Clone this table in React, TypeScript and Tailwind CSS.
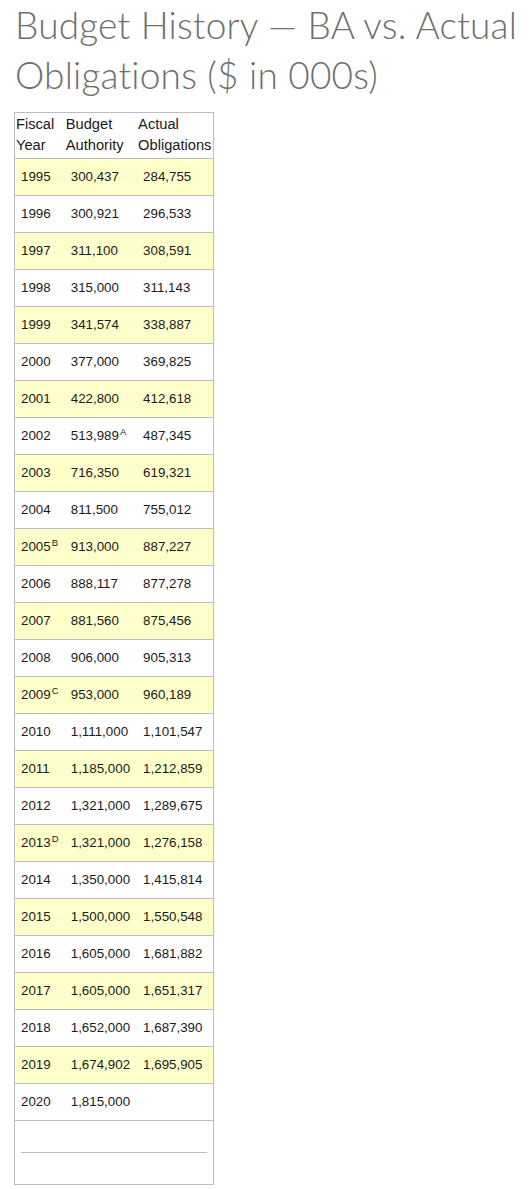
import React from "react";

type Row = {
  year: string;
  yearNote?: string;
  ba: string;
  baNote?: string;
  actual: string;
};

const rows: Row[] = [
  { year: "1995", ba: "300,437", actual: "284,755" },
  { year: "1996", ba: "300,921", actual: "296,533" },
  { year: "1997", ba: "311,100", actual: "308,591" },
  { year: "1998", ba: "315,000", actual: "311,143" },
  { year: "1999", ba: "341,574", actual: "338,887" },
  { year: "2000", ba: "377,000", actual: "369,825" },
  { year: "2001", ba: "422,800", actual: "412,618" },
  { year: "2002", ba: "513,989", baNote: "A", actual: "487,345" },
  { year: "2003", ba: "716,350", actual: "619,321" },
  { year: "2004", ba: "811,500", actual: "755,012" },
  { year: "2005", yearNote: "B", ba: "913,000", actual: "887,227" },
  { year: "2006", ba: "888,117", actual: "877,278" },
  { year: "2007", ba: "881,560", actual: "875,456" },
  { year: "2008", ba: "906,000", actual: "905,313" },
  { year: "2009", yearNote: "C", ba: "953,000", actual: "960,189" },
  { year: "2010", ba: "1,111,000", actual: "1,101,547" },
  { year: "2011", ba: "1,185,000", actual: "1,212,859" },
  { year: "2012", ba: "1,321,000", actual: "1,289,675" },
  { year: "2013", yearNote: "D", ba: "1,321,000", actual: "1,276,158" },
  { year: "2014", ba: "1,350,000", actual: "1,415,814" },
  { year: "2015", ba: "1,500,000", actual: "1,550,548" },
  { year: "2016", ba: "1,605,000", actual: "1,681,882" },
  { year: "2017", ba: "1,605,000", actual: "1,651,317" },
  { year: "2018", ba: "1,652,000", actual: "1,687,390" },
  { year: "2019", ba: "1,674,902", actual: "1,695,905" },
  { year: "2020", ba: "1,815,000", actual: "" },
];

const Note = ({ children }: { children: React.ReactNode }) => (
  <sup className="text-[9.5px] ml-[1px]">{children}</sup>
);

export default function App() {
  return (
    <div className="min-h-[1189px] bg-white pl-[14px] font-['Liberation_Sans',Arial,sans-serif]">
      <h1 className="pl-[1px] font-['Lato',sans-serif] font-light text-[37px] leading-[50px] text-[#6f6f6f] tracking-[0.2px]">
        Budget History — BA vs. Actual Obligations ($ in 000s)
      </h1>
      <table className="mt-[12px] border-collapse border border-[#bdbdbd] text-[#1a1a1a] w-[200px] table-fixed">
        <colgroup>
          <col className="w-[50px]" />
          <col className="w-[72px]" />
          <col className="w-[76px]" />
        </colgroup>
        <thead>
          <tr className="border-b border-[#bdbdbd] text-[14.67px] leading-[21px] text-left align-top">
            <th className="font-normal px-[1px] pt-[1px] pb-[2px]">Fiscal Year</th>
            <th className="font-normal px-[1px] pt-[1px] pb-[2px]">Budget Authority</th>
            <th className="font-normal px-[1px] pt-[1px] pb-[2px]">Actual Obligations</th>
          </tr>
        </thead>
        <tbody className="text-[13.33px]">
          {rows.map((r, i) => (
            <tr
              key={r.year}
              className={`h-[37px] border-b border-[#bdbdbd] ${i % 2 === 0 ? "bg-[#ffffcc]" : "bg-white"}`}
            >
              <td className="px-[6px] whitespace-nowrap">
                {r.year}
                {r.yearNote && <Note>{r.yearNote}</Note>}
              </td>
              <td className="px-[6px] whitespace-nowrap">
                {r.ba}
                {r.baNote && <Note>{r.baNote}</Note>}
              </td>
              <td className="px-[6px] whitespace-nowrap">{r.actual}</td>
            </tr>
          ))}
          <tr className="h-[64px]">
            <td colSpan={3} className="px-[6px]">
              <hr className="border-t border-[#bdbdbd]" />
            </td>
          </tr>
        </tbody>
      </table>
    </div>
  );
}
